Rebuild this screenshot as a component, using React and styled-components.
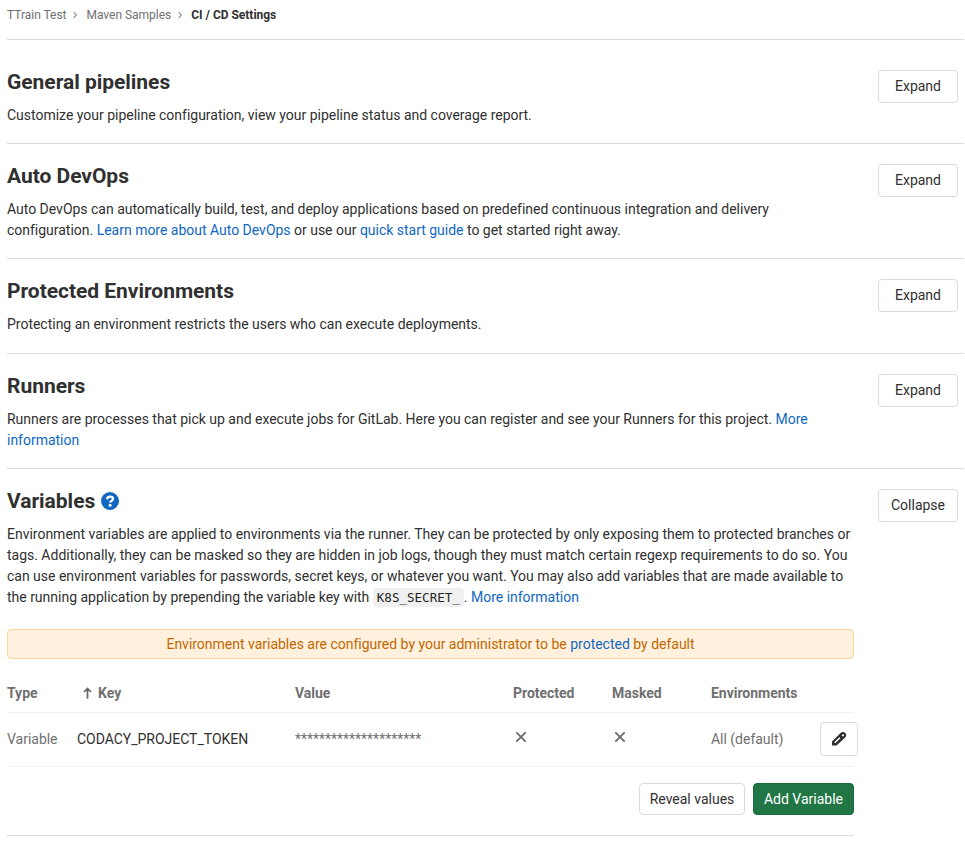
import React from "react";
import styled, { createGlobalStyle } from "styled-components";

const Global = createGlobalStyle`
  * { box-sizing: border-box; }
  body { margin: 0; background: #fff; color: #303030; font: 14px/21px Roboto, "Noto Sans", sans-serif; overflow: hidden; }
`;
const Page = styled.main`padding-left: 7px; width: 964px; height: 862px;`;
const Crumbs = styled.nav`
  height: 40px; display: flex; align-items: center; padding-bottom: 9px; gap: 7px;
  font-size: 12px; line-height: 16px; color: #707070; border-bottom: 1px solid #dbdbdb; letter-spacing: -0.02px;
  strong { color: #303030; font-weight: 700; }
`;
const Section = styled.section`
  display: grid; grid-template-columns: 847px 80px; column-gap: 24px; align-items: start;
  height: ${(p) => p.$height}px; padding-top: ${(p) => p.$top || 20}px;
  border-bottom: ${(p) => (p.$last ? "0" : "1px solid #dbdbdb")};
`;
const Title = styled.h4`
  margin: 0 0 10px; font-size: 21px; line-height: 25px; font-weight: 700; display: flex; align-items: center; gap: 6px;
  height: 25px; letter-spacing: -0.03px;
  svg { margin-bottom: 2px; }
`;
const Text = styled.p`margin: 0; white-space: nowrap; letter-spacing: -0.012px;`;
const Link = styled.a`color: #1068bf;`;
const Button = styled.button`
  height: ${(p) => p.$height || 33}px; width: ${(p) => p.$width || 80}px; padding: 0 0 ${(p) => (p.$height ? 0 : 1)}px;
  display: flex; align-items: center; justify-content: center;
  border: 1px solid ${(p) => (p.$green ? "#1a6b3c" : "#dbdbdb")}; border-radius: 4px;
  background: ${(p) => (p.$green ? "#217645" : "#fff")}; color: ${(p) => (p.$green ? "#fff" : "#303030")};
  font: 14px/20px Roboto, sans-serif;
`;
const EditButton = styled(Button)`margin-bottom: 2px;`;
const Code = styled.code`
  font: 12.6px/18px "DejaVu Sans Mono", monospace; background: #f0f0f0; color: #1f1f1f; padding: 2px 4px; border-radius: 4px;
  letter-spacing: -0.03px;
`;
const Alert = styled.div`
  margin-top: 21px; height: 30px; border: 1px solid #fdd49a; border-radius: 4px; background: #fff1de;
  color: #c26700; display: flex; align-items: center; justify-content: center; white-space: pre; letter-spacing: -0.01px;
`;
const Row = styled.div`
  display: grid; grid-template-columns: 70px 218px 218px 99px 99px 109px 38px; align-items: center;
  height: 54px; padding-top: ${(p) => (p.$head ? 16 : 0)}px; border-bottom: 1px solid #f0f0f0; color: #707070;
  font-weight: ${(p) => (p.$head ? 700 : 400)}; letter-spacing: -0.02px;
`;
const Key = styled.span`
  color: ${(p) => (p.$head ? "inherit" : "#303030")}; display: flex; align-items: center; gap: 5px;
  padding-left: ${(p) => (p.$head ? 6 : 0)}px;
  svg { margin-bottom: 1px; }
`;
const Mark = styled.span`padding-bottom: 5px;`;
const Actions = styled.div`
  height: 69px; display: flex; justify-content: flex-end; align-items: flex-start; gap: 8px; padding-top: 16px;
  border-bottom: 1px solid #dbdbdb;
`;
const Glyph = styled.svg`display: block; flex: none;`;

const Chevron = () => <Glyph width="6" height="8" viewBox="0 0 6 8"><path d="M1 1.500L3.500 4 1 6.500" fill="none" stroke="#999" strokeWidth="1.200" strokeLinecap="round" /></Glyph>;
const Cross = () => <Mark><Glyph width="16" height="16" viewBox="0 0 16 16"><path d="M3.900 3.900l8.200 8.200m0-8.200l-8.200 8.200" stroke="#707070" strokeWidth="2" strokeLinecap="round" /></Glyph></Mark>;
const Pencil = () => (
  <Glyph width="16" height="16" viewBox="0 0 16 16">
    <path d="M1 14.500v-4l8.600-8.400a3 3 0 0 1 4.600 0a3 3 0 0 1 0 4.300L5.600 14.500z" fill="#303030" />
    <path d="M3.700 11.800l5.200-5" stroke="#fff" strokeWidth="1.500" />
    <circle cx="12" cy="4.300" r="1.100" fill="#fff" />
  </Glyph>
);

const sections = [
  ["General pipelines", 104, 30, <Text key="t">Customize your pipeline configuration, view your pipeline status and coverage report.</Text>],
  ["Auto DevOps", 115, 20, <Text key="t">Auto DevOps can automatically build, test, and deploy applications based on predefined continuous integration and delivery<br />configuration. <Link>Learn more about Auto DevOps</Link> or use our <Link>quick start guide</Link> to get started right away.</Text>],
  ["Protected Environments", 95, 20, <Text key="t">Protecting an environment restricts the users who can execute deployments.</Text>],
  ["Runners", 115, 20, <Text key="t">Runners are processes that pick up and execute jobs for GitLab. Here you can register and see your Runners for this project. <Link>More<br />information</Link></Text>],
];

export default function App() {
  return (
    <>
      <Global />
      <Page>
        <Crumbs><span>TTrain Test</span><Chevron /><span>Maven Samples</span><Chevron /><strong>CI / CD Settings</strong></Crumbs>
        {sections.map(([title, height, top, text]) => (
          <Section key={title} $height={height} $top={top}>
            <div><Title>{title}</Title>{text}</div>
            <Button>Expand</Button>
          </Section>
        ))}
        <Section $height={393} $last>
          <div>
            <Title>Variables
              <Glyph width="18" height="18" viewBox="0 0 18 18"><circle cx="9" cy="9" r="9" fill="#1068bf" /><path d="M6 7.200C6.300 5.600 7.400 4.700 9.100 4.700c1.700 0 2.900.9 2.900 2.300 0 1.900-2.700 1.600-2.900 3.600" fill="none" stroke="#fff" strokeWidth="2.300" /><circle cx="9.100" cy="13.200" r="1.500" fill="#fff" /></Glyph>
            </Title>
            <Text>Environment variables are applied to environments via the runner. They can be protected by only exposing them to protected branches or<br />tags. Additionally, they can be masked so they are hidden in job logs, though they must match certain regexp requirements to do so. You<br />can use environment variables for passwords, secret keys, or whatever you want. You may also add variables that are made available to<br />the running application by prepending the variable key with <Code>K8S_SECRET_</Code>. <Link>More information</Link></Text>
            <Alert>Environment variables are configured by your administrator to be <Link>protected</Link> by default</Alert>
            <Row $head>
              <span>Type</span>
              <Key $head><Glyph width="10" height="12" viewBox="0 0 10 12"><path d="M4.500 11V2M1.500 4.500l3-3 3 3" fill="none" stroke="#666" strokeWidth="1.700" strokeLinecap="round" /></Glyph>Key</Key>
              <span>Value</span><span>Protected</span><span>Masked</span><span>Environments</span>
            </Row>
            <Row>
              <span>Variable</span><Key>CODACY_PROJECT_TOKEN</Key><span>*********************</span><Cross /><Cross /><span>All (default)</span>
              <EditButton $width={38} $height={34} aria-label="Edit"><Pencil /></EditButton>
            </Row>
            <Actions><Button $width={106} $height={32}>Reveal values</Button><Button $width={101} $height={32} $green>Add Variable</Button></Actions>
          </div>
          <Button>Collapse</Button>
        </Section>
      </Page>
    </>
  );
}
